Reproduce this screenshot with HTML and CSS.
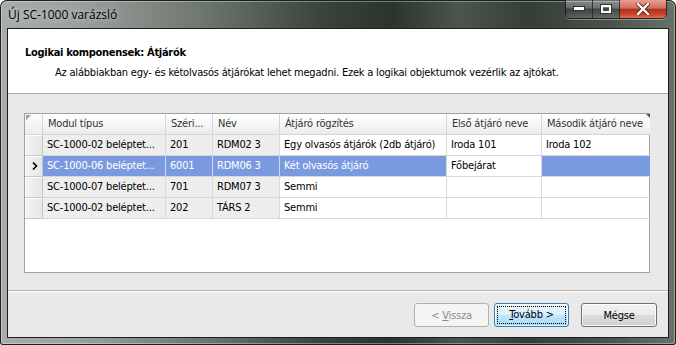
FILE: index.html
```html
<!DOCTYPE html>
<html lang="hu">
<head>
<meta charset="utf-8">
<title>Új SC-1000 varázsló</title>
<link rel="stylesheet" href="styles.css">
</head>
<body>
<div class="window">
  <div class="titlebar">
    <div class="title">Új SC-1000 varázsló</div>
    <div class="controls">
      <div class="ctl min"><svg width="12" height="6" viewBox="0 0 12 6"><rect x="0.5" y="0.5" width="11" height="4" fill="#fff" stroke="#333" stroke-width="1"/></svg></div>
      <div class="ctl max"><svg width="12" height="10" viewBox="0 0 12 10"><rect x="0.5" y="0.5" width="11" height="9" fill="none" stroke="#333" stroke-width="1"/><rect x="2" y="2" width="8" height="6" fill="none" stroke="#fff" stroke-width="2"/><rect x="3.5" y="4.5" width="5" height="2" fill="none" stroke="#444" stroke-width="1"/></svg></div>
      <div class="ctl close"><svg width="14" height="12" viewBox="0 0 14 12"><path d="M2 1 L12 11 M12 1 L2 11" stroke="#5a1a12" stroke-width="4" stroke-linecap="square"/><path d="M2 1 L12 11 M12 1 L2 11" stroke="#fff" stroke-width="2.4" stroke-linecap="square"/></svg></div>
    </div>
  </div>
  <div class="client">
    <div class="header">
      <div class="h-title">Logikai komponensek: Átjárók</div>
      <div class="h-sub">Az alábbiakban egy- és kétolvasós átjárókat lehet megadni. Ezek a logikai objektumok vezérlik az ajtókat.</div>
    </div>
    <div class="body">
      <div class="grid">
        <div class="hc corner"></div>
        <div class="hc">Modul típus</div>
        <div class="hc">Széri...</div>
        <div class="hc">Név</div>
        <div class="hc">Átjáró rögzítés</div>
        <div class="hc">Első átjáró neve</div>
        <div class="hc last">Második átjáró neve</div>

        <div class="rh"></div>
        <div class="c ro">SC-1000-02 beléptet...</div>
        <div class="c ro">201</div>
        <div class="c ro">RDM02 3</div>
        <div class="c">Egy olvasós átjárók (2db átjáró)</div>
        <div class="c">Iroda 101</div>
        <div class="c last">Iroda 102</div>

        <div class="rh"><svg width="6" height="8" viewBox="0 0 6 8"><path d="M1 0.5 L4.5 4 L1 7.5" fill="none" stroke="#000" stroke-width="1.6"/></svg></div>
        <div class="c sel">SC-1000-06 beléptet...</div>
        <div class="c sel">6001</div>
        <div class="c sel">RDM06 3</div>
        <div class="c sel">Két olvasós átjáró</div>
        <div class="c cur">Főbejárat</div>
        <div class="c sel last"></div>

        <div class="rh"></div>
        <div class="c ro">SC-1000-07 beléptet...</div>
        <div class="c ro">701</div>
        <div class="c ro">RDM07 3</div>
        <div class="c">Semmi</div>
        <div class="c"></div>
        <div class="c last"></div>

        <div class="rh"></div>
        <div class="c ro">SC-1000-02 beléptet...</div>
        <div class="c ro">202</div>
        <div class="c ro">TÁRS 2</div>
        <div class="c">Semmi</div>
        <div class="c"></div>
        <div class="c last"></div>
      </div>
    </div>
    <div class="footer">
      <button class="btn disabled"><span class="lbl">&lt; <u>V</u>issza</span></button>
      <button class="btn default"><span class="focus"><u>T</u>ovább &gt;</span></button>
      <button class="btn cancel"><span class="lbl">Mégse</span></button>
    </div>
  </div>
</div>
</body>
</html>
```

FILE: styles.css
```css
* { box-sizing: border-box; }
html, body { margin: 0; padding: 0; background: #ffffff; }
body { width: 676px; height: 345px; overflow: hidden; }

.window {
  width: 676px;
  height: 345px;
  display: flex;
  flex-direction: column;
  border-radius: 7px 7px 3px 3px;
  background: linear-gradient(90deg, #a8ada9 0%, #9aa09b 12%, #6e7670 30%, #3a423c 48%, #2c342e 58%, #4d554f 68%, #363e38 78%, #4a524c 90%, #6a726c 100%);
  box-shadow: inset 0 0 0 1px #1c211e, inset 0 0 0 2px rgba(255,255,255,0.35);
  font-family: "DejaVu Sans Condensed", "Liberation Sans", sans-serif;
  font-size: 11px;
  letter-spacing: -0.2px;
  color: #000;
}

.titlebar {
  height: 29px;
  flex: none;
  display: flex;
  justify-content: space-between;
  padding: 0 9px 0 8px;
  letter-spacing: 0;
}
.title {
  font-family: "Open Sans", "Noto Sans", sans-serif;
  font-size: 12px;
  line-height: 29px;
  color: #000;
  text-shadow: 0 0 6px rgba(255,255,255,0.7);
}
.controls {
  display: flex;
  height: 19px;
  border: 1px solid rgba(20,25,22,0.8);
  border-top: none;
  border-radius: 0 0 5px 5px;
  overflow: hidden;
  box-shadow: 0 1px 0 rgba(255,255,255,0.35);
}
.ctl {
  display: flex;
  align-items: center;
  justify-content: center;
  height: 18px;
}
.min, .max {
  width: 27px;
  background: linear-gradient(180deg, rgba(255,255,255,0.35) 0%, rgba(255,255,255,0.2) 45%, rgba(0,0,0,0.15) 50%, rgba(255,255,255,0.15) 100%);
  border-right: 1px solid rgba(20,25,22,0.7);
}
.close {
  width: 46px;
  background: linear-gradient(180deg, #e8a090 0%, #d0705c 45%, #b0301c 52%, #c8452c 80%, #e07050 100%);
}

.client {
  flex: 1;
  margin: 0 8px 8px 8px;
  display: flex;
  flex-direction: column;
  background: #e9e9e9;
  box-shadow: 0 0 0 1px #1a1f1c;
}

.header {
  height: 65px;
  flex: none;
  background: #ffffff;
  border-bottom: 1px solid #a8a8a8;
  padding: 16px 0 0 17px;
}
.h-title {
  font-weight: bold;
  line-height: 15px;
  letter-spacing: -0.3px;
}
.h-sub {
  margin-top: 5px;
  padding-left: 30px;
  line-height: 15px;
}

.body {
  height: 196px;
  flex: none;
  padding: 19px 18px 0 16px;
}
.grid {
  height: 160px;
  border: 1px solid #a0a0a0;
  background: #ffffff;
  display: grid;
  grid-template-columns: 18px 123px 47px 67px 167px 95px 108px;
  grid-auto-rows: 21px;
  align-content: start;
}
.hc {
  background: linear-gradient(180deg, #ffffff 0%, #f6f6f6 50%, #ececec 100%);
  border-right: 1px solid #d5d5d5;
  border-bottom: 1px solid #d5d5d5;
  padding-left: 5px;
  line-height: 20px;
  color: #333;
  white-space: nowrap;
  overflow: hidden;
}
.hc.corner {
  padding: 0;
  background: linear-gradient(180deg, #fbfbfb, #eeeeee);
  position: relative;
}
.hc.corner::before {
  content: "";
  position: absolute;
  left: 1px;
  top: 1px;
  border-top: 5px solid #9a9a9a;
  border-right: 5px solid transparent;
}
.hc.last { border-right: none; position: relative; }
.hc.last::after {
  content: "";
  position: absolute;
  right: 0;
  top: 0;
  border-top: 4px solid #555;
  border-left: 4px solid transparent;
}
.rh {
  background: linear-gradient(90deg, #f4f4f4 0%, #e6e6e6 100%);
  border-right: 1px solid #c8c8c8;
  border-bottom: 1px solid #c8c8c8;
  box-shadow: inset 1px 1px 0 #ffffff;
  display: flex;
  align-items: center;
  justify-content: center;
  padding-left: 2px;
}
.c {
  border-right: 1px solid #d8d8d8;
  border-bottom: 1px solid #d8d8d8;
  padding-left: 4px;
  line-height: 20px;
  white-space: nowrap;
  overflow: hidden;
  color: #000;
}
.c.last { border-right: none; }
.c.ro { background: #eeeeee; }
.c.sel { background: #7a9ae0; color: #ffffff; }
.c.cur { background: #ffffff; color: #000; }

.footer {
  height: 47px;
  flex: none;
  border-top: 1px solid #b4b4b4;
  box-shadow: inset 0 1px 0 #ffffff;
  display: flex;
  justify-content: flex-end;
  align-items: flex-start;
  padding: 12px 11px 0 0;
}
.btn {
  font-family: inherit;
  font-size: 11px;
  letter-spacing: -0.2px;
  height: 24px;
  width: 75px;
  margin: 0;
  padding: 0;
  border: 1px solid #707070;
  border-radius: 3px;
  background: linear-gradient(180deg, #f2f2f2 0%, #ebebeb 48%, #dddddd 52%, #cfcfcf 100%);
  box-shadow: inset 0 0 0 1px rgba(255,255,255,0.8);
  color: #000;
  display: flex;
  align-items: center;
  justify-content: center;
}
.btn .lbl { display: block; white-space: pre; }
.btn.disabled {
  border-color: #adb2b5;
  background: #f4f4f4;
  color: #8a8a8a;
  box-shadow: none;
}
.btn.default {
  margin-left: 5px;
  border-color: #3c7fb1;
  background: linear-gradient(180deg, #eaf6fd 0%, #d9f0fc 48%, #bee6fd 52%, #a7d9f5 100%);
  box-shadow: inset 0 0 0 1px rgba(255,255,255,0.6);
}
.btn .focus {
  display: block;
  width: 69px;
  height: 18px;
  line-height: 16px;
  border: 1px dotted #000;
  text-align: center;
}
.btn.cancel { margin-left: 12px; width: 76px; }
u { text-decoration: underline; }
```
